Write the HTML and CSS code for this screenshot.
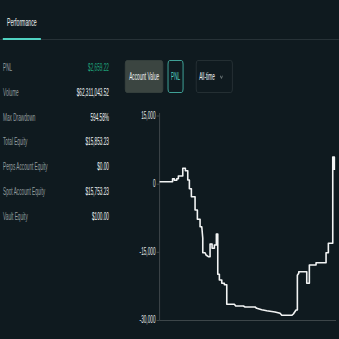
FILE: index.html
```html
<!DOCTYPE html>
<html lang="en">
<head>
    <meta charset="UTF-8">
    <meta name="viewport" content="width=device-width, initial-scale=1.0">
    <title>Performance</title>
    <link rel="stylesheet" href="styles.css">
</head>
<body>
  <div class="frame">
    <div class="page">
        <div class="tabs">
            <div class="tab active">Performance</div>
        </div>

        <div class="content">
            <div class="stats">
                <div class="row"><span class="label">PNL</span><span class="value up">$2,659.22</span></div>
                <div class="row"><span class="label">Volume</span><span class="value">$62,311,043.52</span></div>
                <div class="row"><span class="label">Max Drawdown</span><span class="value">594.58%</span></div>
                <div class="row"><span class="label">Total Equity</span><span class="value">$15,853.23</span></div>
                <div class="row"><span class="label">Perps Account Equity</span><span class="value">$0.00</span></div>
                <div class="row"><span class="label">Spot Account Equity</span><span class="value">$15,753.23</span></div>
                <div class="row"><span class="label">Vault Equity</span><span class="value">$100.00</span></div>
            </div>

            <div class="side">
                <div class="controls">
                    <button class="btn btn-fill">Account Value</button>
                    <button class="btn btn-outline">PNL</button>
                    <button class="btn btn-select">
                        All-time
                        <svg class="chevron" width="6.4" height="4" viewBox="0 0 6.4 4">
                            <path d="M0.6 0.6 L3.2 3.4 L5.8 0.6" fill="none" stroke="#8a9494" stroke-width="1"/>
                        </svg>
                    </button>
                </div>

                <div class="chart">
                    <div class="yaxis">
                        <span>15,000</span>
                        <span>0</span>
                        <span>-15,000</span>
                        <span>-30,000</span>
                    </div>
                    <!-- drawn in screen px, stretched back by the page squish -->
                    <svg class="plot" width="390.4" height="225" viewBox="155.5 105 183.5 225" preserveAspectRatio="none">
                        <g stroke="#3d4649" stroke-width="1" fill="none">
                            <path d="M159.5 113 V320.5 H336"/>
                            <path d="M156.5 116 H159.5 M156.5 184.2 H159.5 M156.5 252.3 H159.5 M156.5 320.5 H159.5"/>
                        </g>
                        <path fill="none" stroke="#f2f4f4" stroke-width="1.6" stroke-linejoin="round"
                              d="M159.5,181.7 H172.5 V178.7 H174.3 V180.3 H176.7 V178.7 H178.3 V176 H182.7 V168.3 H185.3 V170.7 H187.7 V180 H189.3 V188.7 H191.3 V196.7 H195 V210 H197.3 V219.3 H200 V226.7 H201.7 L202.7,238.3 V252.7 H205 L206,255 L208.3,256.7 H210 V244 H212 V248.3 H214.3 V245 H216.3 V234 H217.7 V274.3 H219.3 V280 H221.7 V283.3 H224.3 V284.7 H226.7 V304.3 H234.3 L235.7,306 H243.3 L245,307 H255 L256.7,308.3 L261.7,309.7 L266.7,310.7 L275,312 L280,313.3 L281.7,315.3 H291.7 L293.3,314 L296,310 H297.3 V275.3 L298.7,273.3 V271.7 H306.7 V283.3 H309.3 V265 H316 V262.7 H326 V252.7 H328.3 V243.3 H332.7 V157 H334.3 V170"/>
                    </svg>
                </div>
            </div>
        </div>
    </div>
  </div>
</body>
</html>
```

FILE: styles.css
```css
:root {
    --bg: #0f1a1f;
    --text: #f0f4f3;
    --muted: #949e9f;
    --accent: #50d2c1;
    --green: #1fa67d;
    --line: #273237;
}

html, body {
    margin: 0;
    overflow: hidden;
    background-color: var(--bg);
}

body {
    font-family: 'Liberation Sans', Arial, sans-serif;
    font-size: 10px;
    color: var(--text);
}

.frame {
    width: 339px;
    height: 339px;
    overflow: hidden;
}

.page {
    width: 721.28px;
    transform: scaleX(0.47);
    transform-origin: 0 0;
}

.tabs {
    display: flex;
    height: 39px;
    padding-left: 6.4px;
    border-bottom: 1px solid var(--line);
}

.tab {
    box-sizing: border-box;
    height: 40px;
    padding: 6px 8.6px 0;
    margin-bottom: -1px;
    display: flex;
    align-items: center;
    font-size: 11px;
    color: var(--text);
}

.tab.active {
    border-bottom: 2px solid var(--accent);
}

.content {
    display: flex;
}

.stats {
    width: 225.5px;
    margin-left: 6.4px;
    padding-top: 16.1px;
}

.row {
    display: flex;
    justify-content: space-between;
    line-height: 24.75px;
    white-space: nowrap;
}

.label {
    color: var(--muted);
}

.value.up {
    color: var(--green);
}

.side {
    flex: 1;
    margin-left: 34.1px;
    padding-top: 20px;
}

.controls {
    display: flex;
}

.btn {
    box-sizing: border-box;
    height: 33px;
    display: flex;
    align-items: center;
    font-family: inherit;
    font-size: 10px;
    color: var(--text);
    background: transparent;
    border: 1px solid transparent;
    border-radius: 4px;
    padding: 0;
    cursor: pointer;
}

.btn-fill {
    width: 81.5px;
    justify-content: center;
    background-color: #3b4541;
    border-color: #3b4541;
}

.btn-outline {
    width: 33.5px;
    justify-content: center;
    margin-left: 9.4px;
    color: var(--accent);
    border-color: var(--accent);
}

.btn-select {
    width: 77.9px;
    margin-left: 26.4px;
    padding-left: 6px;
    border-color: #2c373b;
}

.chevron {
    margin-left: 10.6px;
}

.chart {
    display: flex;
    align-items: flex-start;
    margin-top: 12px;
}

.yaxis {
    width: 64.9px;
    height: 214.8px;
    margin-top: 5.7px;
    display: flex;
    flex-direction: column;
    justify-content: space-between;
    align-items: flex-end;
    line-height: 10px;
    color: #e2e6e6;
}

.plot {
    display: block;
}
```
